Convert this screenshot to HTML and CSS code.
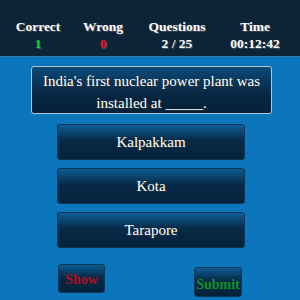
FILE: index.html
```html
<!DOCTYPE html>
<html>
<head>
	<title>Quiz</title>
	<link rel="stylesheet" href="styles.css">
</head>
<body>
	<!-- score bar -->
	<div id="header">
		<div class="stat">
			<div class="label">Correct</div>
			<div class="value green">1</div>
		</div>
		<div class="stat">
			<div class="label">Wrong</div>
			<div class="value red">0</div>
		</div>
		<div class="stat">
			<div class="label">Questions</div>
			<div class="value">2 / 25</div>
		</div>
		<div class="stat">
			<div class="label">Time</div>
			<div class="value">00:12:42</div>
		</div>
	</div>
	<!-- question and choices -->
	<div id="question">India's first nuclear power plant was installed at _____.</div>
	<div id="options">
		<div class="option">Kalpakkam</div>
		<div class="option">Kota</div>
		<div class="option">Tarapore</div>
	</div>
	<div id="actions">
		<div class="action show">Show</div>
		<div class="action submit">Submit</div>
	</div>
</body>
</html>
```

FILE: styles.css
```css
body{
	margin: 0;
	background-color: #0b76bc;
	font-family: "Liberation Serif", serif;
	color: #fff;
}
#header{
	display: grid;
	grid-template-columns: 76px 54px 94px 62px;
	height: 57px;
	padding-top: 18px;
	box-sizing: border-box;
	background-color: #0d2338;
	border-bottom: 1px solid #2f7fb5;
}
.stat{
	text-align: center;
	font-weight: bold;
	font-size: 13.5px;
	line-height: 17px;
	text-shadow: 1px 1px 1px #555;
}
.green{
	color: #17d43a;
}
.red{
	color: #e0101a;
}
#question{
	width: 241px;
	height: 48px;
	box-sizing: border-box;
	margin: 9px 0 0 31px;
	padding-top: 3px;
	border: 1px solid #b8c4d0;
	border-radius: 3px;
	background: linear-gradient(#0c4a7a, #072640 60%, #06213a);
	text-align: center;
	font-size: 15px;
	line-height: 22px;
	text-shadow: 1px 1px 1px #333;
}
#options{
	display: flex;
	flex-direction: column;
	gap: 8px;
	margin: 10px 0 0 57px;
}
.option, .action{
	background: linear-gradient(#0e5d94, #062a48 45%, #05223b);
	border: 1px solid #0a3658;
	border-radius: 3px;
	box-sizing: border-box;
	text-align: center;
}
.option{
	width: 188px;
	height: 36px;
	line-height: 34px;
	font-size: 15px;
	text-shadow: 1px 1px 1px #333;
}
#actions{
	display: flex;
	margin: 16px 0 0 58px;
}
.action{
	width: 47px;
	height: 29px;
	line-height: 29px;
	font-weight: bold;
	font-size: 14px;
}
.show{
	color: #b0101e;
}
.submit{
	color: #149028;
	width: 48px;
	height: 30px;
	margin: 3px 0 0 89px;
	line-height: 33px;
}
```
